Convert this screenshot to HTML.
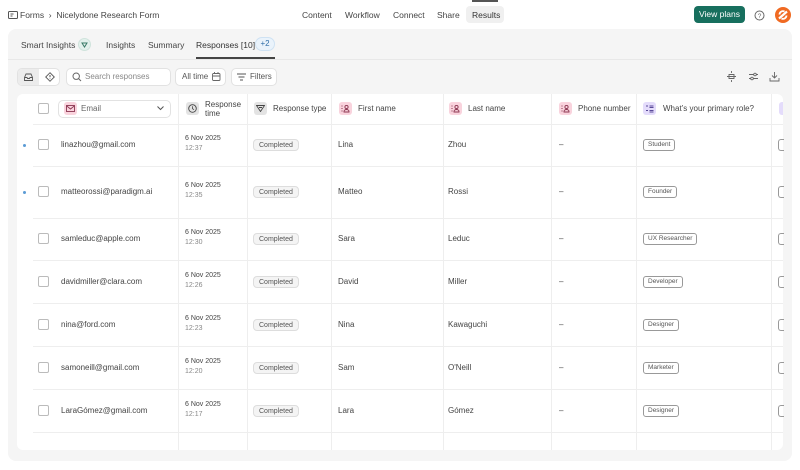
<!DOCTYPE html>
<html><head><style>
*{box-sizing:border-box;margin:0;padding:0}
body{width:800px;height:470px;background:#fff;font-family:"Liberation Sans",sans-serif;color:#333;position:relative;overflow:hidden;font-size:8px}
.a{position:absolute}
.nav{font-size:8.5px;color:#444}
.panel{left:8px;top:29px;width:784px;height:432px;background:#f5f5f5;border-radius:8px}
.card{left:17px;top:94px;width:766px;height:356px;background:#fff;border-radius:6px;overflow:hidden}
.vl{position:absolute;top:0;bottom:0;width:1px;background:#eee}
.hl{position:absolute;left:16px;right:0;height:1px;background:#eee}
.cb{position:absolute;width:11px;height:11px;border:1px solid #bbb;border-radius:2px;background:#fff}
.t{position:absolute;font-size:8px;color:#444;white-space:nowrap}
.pill{position:absolute;font-size:7px;color:#555;border:1px solid #ddd;background:#f4f4f4;border-radius:4px;padding:1px 5px;height:12px;line-height:10px}
.tag{position:absolute;font-size:6.5px;color:#555;border:1px solid #999;border-radius:3px;padding:0 4px;height:12px;line-height:10px;background:#fff}
.ic{position:absolute;width:13px;height:13px;border-radius:3px}
.btn{position:absolute;height:18px;border:1px solid #e2e2e2;background:#fff;border-radius:5px;font-size:8px;color:#555;line-height:16px}
</style></head><body>
<svg width="0" height="0" style="position:absolute"><defs>
<symbol id="p" viewBox="0 0 13 13"><rect width="13" height="13" rx="3" fill="#f9d3dd"/><path d="M2.5 4h1M2.5 6.5h1M2.5 9h1" stroke="#8a3550" stroke-width="1"/><circle cx="7.5" cy="5" r="1.6" fill="none" stroke="#8a3550" stroke-width=".9"/><path d="M5 10v-.5a2.5 2 0 0 1 5 0v.5z" fill="none" stroke="#8a3550" stroke-width=".9"/></symbol>
</defs></svg>
<!-- top bar -->
<svg class="a" style="left:8px;top:11px" width="10" height="8" viewBox="0 0 10 8"><rect x=".5" y=".5" width="9" height="7" rx="1" fill="none" stroke="#555"/><path d="M2.5 3h3M2.5 5h2" stroke="#555"/></svg>
<div class="a nav" style="left:20px;top:10px">Forms &nbsp;›&nbsp; Nicelydone Research Form</div>
<div class="a nav" style="left:302px;top:10px">Content</div>
<div class="a nav" style="left:345px;top:10px">Workflow</div>
<div class="a nav" style="left:393px;top:10px">Connect</div>
<div class="a nav" style="left:437px;top:10px">Share</div>
<div class="a" style="left:466px;top:6px;width:38px;height:17px;background:#f0f0f0;border-radius:4px"></div>
<div class="a nav" style="left:472px;top:10px;color:#333">Results</div>
<div class="a" style="left:472px;top:0;width:26px;height:2px;background:#555"></div>
<div class="a" style="left:694px;top:6px;width:51px;height:17px;background:#176f5e;border-radius:4px;color:#fff;font-size:8.5px;text-align:center;line-height:17px">View plans</div>
<svg class="a" style="left:754px;top:10px" width="11" height="11"><circle cx="5.5" cy="5.5" r="4.5" fill="none" stroke="#666"/><text x="5.5" y="8" font-size="6.5" text-anchor="middle" fill="#666" font-family="Liberation Sans">?</text></svg>
<svg class="a" style="left:774px;top:6px" width="18" height="18"><circle cx="9" cy="9" r="8" fill="#f06a22"/><path d="M5 12.5L13 5.5" stroke="#fff" stroke-width="2.2"/><path d="M5.5 8.5a3.5 3.5 0 0 1 5-3M12.5 9.5a3.5 3.5 0 0 1-5 3" stroke="#fff" stroke-width="1.8" fill="none"/></svg>
<div class="a panel"></div>
<!-- tabs -->
<div class="a nav" style="left:21px;top:40px">Smart Insights</div>
<div class="a" style="left:78px;top:38px;width:13px;height:13px;border-radius:50%;background:#e3f1ec;border:1px solid #cfe3dc"></div>
<svg class="a" style="left:81px;top:41px" width="7" height="7"><path d="M1 2h5L3.5 6z" fill="none" stroke="#3a7a67" stroke-width="1"/></svg>
<div class="a nav" style="left:106px;top:40px">Insights</div>
<div class="a nav" style="left:148px;top:40px">Summary</div>
<div class="a nav" style="left:196px;top:40px;color:#333">Responses [10]</div>
<div class="a" style="left:255px;top:37px;width:20px;height:14px;border-radius:7px;background:#eaf3fb;border:1px solid #cfe2f3;font-size:8px;color:#2f6ea8;text-align:center;line-height:12px">+2</div>
<div class="a" style="left:196px;top:57px;width:79px;height:2px;background:#444"></div>
<div class="a" style="left:8px;top:59px;width:784px;height:1px;background:#e8e8e8"></div>
<!-- toolbar -->
<div class="a" style="left:17px;top:68px;width:43px;height:18px;border:1px solid #e2e2e2;border-radius:5px;background:#fff"></div>
<div class="a" style="left:18px;top:69px;width:21px;height:16px;background:#ececec;border-radius:4px 0 0 4px"></div>
<svg class="a" style="left:24px;top:73px" width="9" height="8"><path d="M.5 4.5L2 1h5l1.5 3.5v3h-8z M.5 4.5h2.5l.5 1h2l.5-1h2.5" fill="none" stroke="#555" stroke-width=".9"/></svg>
<svg class="a" style="left:45px;top:72px" width="10" height="10"><path d="M5 .7L9.3 5 5 9.3.7 5z" fill="none" stroke="#555" stroke-width=".9"/><path d="M5 3v2.3M5 6.5v.6" stroke="#555"/></svg>
<div class="btn" style="left:66px;top:68px;width:105px"></div>
<svg class="a" style="left:72px;top:72px" width="10" height="10"><circle cx="4.2" cy="4.2" r="3.2" fill="none" stroke="#666" stroke-width="1"/><path d="M6.6 6.6L9 9" stroke="#666"/></svg>
<div class="t" style="left:85px;top:72px;color:#888">Search responses</div>
<div class="btn" style="left:175px;top:68px;width:51px;padding-left:6px">All time</div>
<svg class="a" style="left:212px;top:72px" width="9" height="9"><rect x=".5" y="1.5" width="7.5" height="7" rx="1" fill="none" stroke="#666" stroke-width=".9"/><path d="M.5 4h7.5M2.5 0v2M6 0v2" stroke="#666" stroke-width=".9"/></svg>
<div class="btn" style="left:231px;top:68px;width:46px;padding-left:18px">Filters</div>
<svg class="a" style="left:237px;top:73px" width="9" height="8"><path d="M0 1h9M1.5 4h6M3 7h3" stroke="#555" stroke-width="1"/></svg>
<svg class="a" style="left:726px;top:71px" width="11" height="11"><path d="M1 5.5h9M3 3.5h5v4H3z M5.5 0v2M5.5 9v2" fill="none" stroke="#666" stroke-width=".9"/></svg>
<svg class="a" style="left:748px;top:71px" width="11" height="11"><path d="M1 3.5h9M1 7.5h9" stroke="#666" stroke-width=".9"/><circle cx="7" cy="3.5" r="1.3" fill="#fff" stroke="#666" stroke-width=".9"/><circle cx="4" cy="7.5" r="1.3" fill="#fff" stroke="#666" stroke-width=".9"/></svg>
<svg class="a" style="left:769px;top:71px" width="11" height="11"><path d="M5.5 1v6M3 4.5l2.5 2.5L8 4.5M1 7v3h9V7" fill="none" stroke="#666" stroke-width=".9"/></svg>
<!-- table -->
<div class="a card">
<div class="vl" style="left:161px"></div><div class="vl" style="left:230px"></div><div class="vl" style="left:314px"></div><div class="vl" style="left:426px"></div><div class="vl" style="left:534px"></div><div class="vl" style="left:619px"></div><div class="vl" style="left:754px"></div>
<div class="hl" style="top:30px"></div><div class="hl" style="top:72px"></div><div class="hl" style="top:124px"></div><div class="hl" style="top:166px"></div><div class="hl" style="top:209px"></div><div class="hl" style="top:252px"></div><div class="hl" style="top:295px"></div><div class="hl" style="top:338px"></div>
</div>
<div class="cb" style="left:38px;top:103px"></div>
<div class="a" style="left:58px;top:100px;width:113px;height:18px;border:1px solid #e2e2e2;border-radius:5px;background:#fff"></div>
<div class="ic" style="left:64px;top:102px;background:#f9d3dd"></div>
<svg class="a" style="left:66px;top:105px" width="9" height="7"><rect x=".5" y=".5" width="8" height="6" fill="none" stroke="#8a3550" stroke-width=".9"/><path d="M.5 .8L4.5 4 8.5.8" fill="none" stroke="#8a3550" stroke-width=".9"/></svg>
<div class="t" style="left:81px;top:104px;color:#666">Email</div>
<svg class="a" style="left:157px;top:106px" width="7" height="5"><path d="M.5.5l3 3 3-3" fill="none" stroke="#555"/></svg>
<div class="ic" style="left:186px;top:102px;background:#e3e3e3"></div>
<svg class="a" style="left:188px;top:104px" width="9" height="9"><circle cx="4.5" cy="4.5" r="3.8" fill="none" stroke="#444" stroke-width=".9"/><path d="M4.5 2.3v2.4l1.5 1" fill="none" stroke="#444" stroke-width=".8"/></svg>
<div class="t" style="left:205px;top:100px;line-height:9px">Response<br>time</div>
<div class="ic" style="left:254px;top:102px;background:#e3e3e3"></div>
<svg class="a" style="left:256px;top:105px" width="9" height="7"><path d="M.5.5h8L4.5 6.5z M3 2.5h3" fill="none" stroke="#444" stroke-width=".9"/></svg>
<div class="t" style="left:273px;top:104px">Response type</div>
<svg class="a" style="left:339px;top:102px" width="13" height="13"><use href="#p"/></svg>
<div class="t" style="left:358px;top:104px">First name</div>
<svg class="a" style="left:449px;top:102px" width="13" height="13"><use href="#p"/></svg>
<div class="t" style="left:468px;top:104px">Last name</div>
<svg class="a" style="left:559px;top:102px" width="13" height="13"><use href="#p"/></svg>
<div class="t" style="left:578px;top:104px">Phone number</div>
<svg class="a" style="left:643px;top:102px" width="13" height="13"><rect width="13" height="13" rx="3" fill="#e4dcfb"/><path d="M3 4h2M3 8.5h2M6.5 4h4M6.5 5.5h4M6.5 8.5h4M6.5 10h4" stroke="#5a4a9a" stroke-width=".9"/></svg>
<div class="t" style="left:663px;top:104px">What’s your primary role?</div>
<div class="ic" style="left:779px;top:102px;width:4px;background:#e4dcfb;border-radius:3px 0 0 3px"></div>

<!-- rows -->
<div class="a" style="left:23px;top:144px;width:3px;height:3px;border-radius:50%;background:#5b9bd5"></div>
<div class="a" style="left:23px;top:191px;width:3px;height:3px;border-radius:50%;background:#5b9bd5"></div>

<div class="cb" style="left:38px;top:139px"></div><div class="t" style="left:61px;top:140px">linazhou@gmail.com</div>
<div class="t" style="left:185px;top:134px;font-size:7px;line-height:10px">6 Nov 2025<br><span style="color:#888">12:37</span></div>
<div class="pill" style="left:253px;top:139px">Completed</div><div class="t" style="left:338px;top:140px">Lina</div><div class="t" style="left:448px;top:140px">Zhou</div><div class="t" style="left:559px;top:140px">–</div><div class="tag" style="left:643px;top:139px">Student</div>

<div class="cb" style="left:38px;top:186px"></div><div class="t" style="left:61px;top:187px">matteorossi@paradigm.ai</div>
<div class="t" style="left:185px;top:181px;font-size:7px;line-height:10px">6 Nov 2025<br><span style="color:#888">12:35</span></div>
<div class="pill" style="left:253px;top:186px">Completed</div><div class="t" style="left:338px;top:187px">Matteo</div><div class="t" style="left:448px;top:187px">Rossi</div><div class="t" style="left:559px;top:187px">–</div><div class="tag" style="left:643px;top:186px">Founder</div>

<div class="cb" style="left:38px;top:233px"></div><div class="t" style="left:61px;top:234px">samleduc@apple.com</div>
<div class="t" style="left:185px;top:228px;font-size:7px;line-height:10px">6 Nov 2025<br><span style="color:#888">12:30</span></div>
<div class="pill" style="left:253px;top:233px">Completed</div><div class="t" style="left:338px;top:234px">Sara</div><div class="t" style="left:448px;top:234px">Leduc</div><div class="t" style="left:559px;top:234px">–</div><div class="tag" style="left:643px;top:233px">UX Researcher</div>

<div class="cb" style="left:38px;top:276px"></div><div class="t" style="left:61px;top:277px">davidmiller@clara.com</div>
<div class="t" style="left:185px;top:271px;font-size:7px;line-height:10px">6 Nov 2025<br><span style="color:#888">12:26</span></div>
<div class="pill" style="left:253px;top:276px">Completed</div><div class="t" style="left:338px;top:277px">David</div><div class="t" style="left:448px;top:277px">Miller</div><div class="t" style="left:559px;top:277px">–</div><div class="tag" style="left:643px;top:276px">Developer</div>

<div class="cb" style="left:38px;top:319px"></div><div class="t" style="left:61px;top:320px">nina@ford.com</div>
<div class="t" style="left:185px;top:314px;font-size:7px;line-height:10px">6 Nov 2025<br><span style="color:#888">12:23</span></div>
<div class="pill" style="left:253px;top:319px">Completed</div><div class="t" style="left:338px;top:320px">Nina</div><div class="t" style="left:448px;top:320px">Kawaguchi</div><div class="t" style="left:559px;top:320px">–</div><div class="tag" style="left:643px;top:319px">Designer</div>

<div class="cb" style="left:38px;top:362px"></div><div class="t" style="left:61px;top:363px">samoneill@gmail.com</div>
<div class="t" style="left:185px;top:357px;font-size:7px;line-height:10px">6 Nov 2025<br><span style="color:#888">12:20</span></div>
<div class="pill" style="left:253px;top:362px">Completed</div><div class="t" style="left:338px;top:363px">Sam</div><div class="t" style="left:448px;top:363px">O'Neill</div><div class="t" style="left:559px;top:363px">–</div><div class="tag" style="left:643px;top:362px">Marketer</div>

<div class="cb" style="left:38px;top:405px"></div><div class="t" style="left:61px;top:406px">LaraGómez@gmail.com</div>
<div class="t" style="left:185px;top:400px;font-size:7px;line-height:10px">6 Nov 2025<br><span style="color:#888">12:17</span></div>
<div class="pill" style="left:253px;top:405px">Completed</div><div class="t" style="left:338px;top:406px">Lara</div><div class="t" style="left:448px;top:406px">Gómez</div><div class="t" style="left:559px;top:406px">–</div><div class="tag" style="left:643px;top:405px">Designer</div>

<div class="a" style="left:778px;top:139px;width:6px;height:12px;border:1px solid #999;border-right:none;border-radius:3px 0 0 3px"></div>
<div class="a" style="left:778px;top:186px;width:6px;height:12px;border:1px solid #999;border-right:none;border-radius:3px 0 0 3px"></div>
<div class="a" style="left:778px;top:233px;width:6px;height:12px;border:1px solid #999;border-right:none;border-radius:3px 0 0 3px"></div>
<div class="a" style="left:778px;top:276px;width:6px;height:12px;border:1px solid #999;border-right:none;border-radius:3px 0 0 3px"></div>
<div class="a" style="left:778px;top:319px;width:6px;height:12px;border:1px solid #999;border-right:none;border-radius:3px 0 0 3px"></div>
<div class="a" style="left:778px;top:362px;width:6px;height:12px;border:1px solid #999;border-right:none;border-radius:3px 0 0 3px"></div>
<div class="a" style="left:778px;top:405px;width:6px;height:12px;border:1px solid #999;border-right:none;border-radius:3px 0 0 3px"></div>
</body></html>
